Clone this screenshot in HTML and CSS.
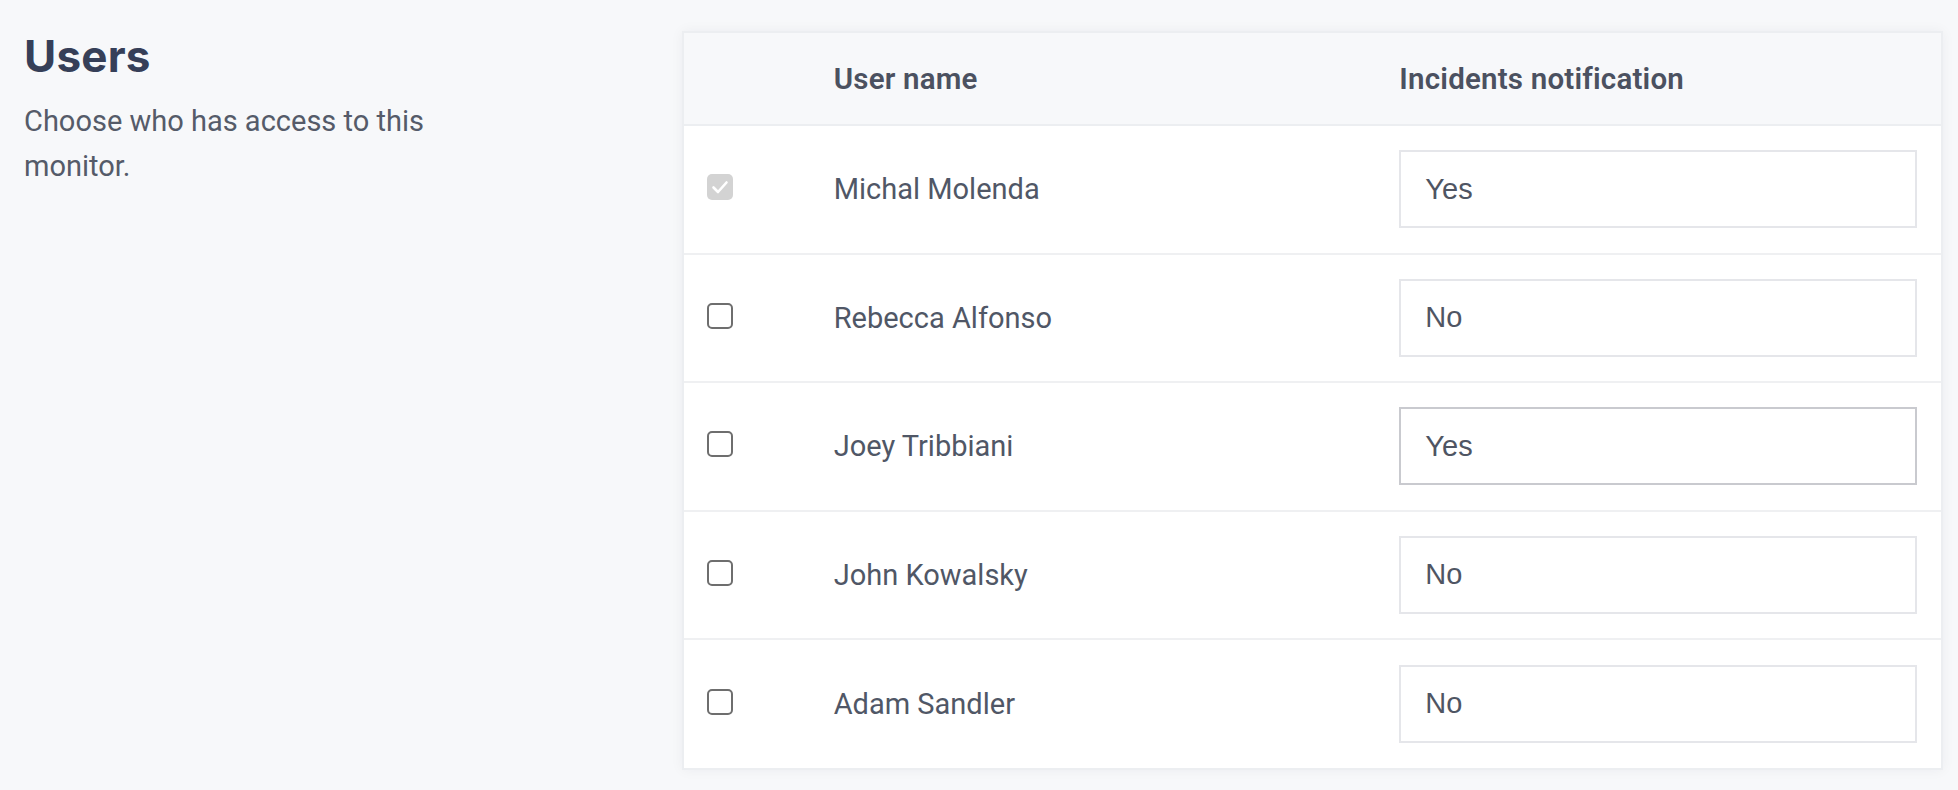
FILE: index.html
```html
<!DOCTYPE html>
<html lang="en">
<head>
<meta charset="utf-8">
<title>Users</title>
<link rel="stylesheet" href="styles.css">
</head>
<body>
<main class="page">
  <section class="intro">
    <h1 class="intro-title">Users</h1>
    <p class="intro-text">Choose who has access to this monitor.</p>
  </section>
  <section class="card">
    <table class="users">
      <colgroup>
        <col class="col-check">
        <col class="col-name">
        <col class="col-notify">
      </colgroup>
      <thead>
        <tr>
          <th></th>
          <th>User name</th>
          <th>Incidents notification</th>
        </tr>
      </thead>
      <tbody>
        <tr>
          <td><span class="check check-on"><svg viewBox="0 0 26 26"><path d="M6.5 13.5l4.5 4.5 8.5-9.5" fill="none" stroke="#fff" stroke-width="2.6" stroke-linecap="round" stroke-linejoin="round"/></svg></span></td>
          <td class="name">Michal Molenda</td>
          <td><div class="select">Yes</div></td>
        </tr>
        <tr>
          <td><span class="check"></span></td>
          <td class="name">Rebecca Alfonso</td>
          <td><div class="select">No</div></td>
        </tr>
        <tr>
          <td><span class="check"></span></td>
          <td class="name">Joey Tribbiani</td>
          <td><div class="select select-hover">Yes</div></td>
        </tr>
        <tr>
          <td><span class="check"></span></td>
          <td class="name">John Kowalsky</td>
          <td><div class="select">No</div></td>
        </tr>
        <tr>
          <td><span class="check"></span></td>
          <td class="name">Adam Sandler</td>
          <td><div class="select">No</div></td>
        </tr>
      </tbody>
    </table>
  </section>
</main>
</body>
</html>
```

FILE: styles.css
```css
* { box-sizing: border-box; }

html, body {
  margin: 0;
  padding: 0;
  background: #f7f8fa;
}

body {
  font-family: Roboto, "Noto Sans", sans-serif;
  color: #505766;
}

.page {
  display: grid;
  grid-template-columns: 658px 1fr;
  padding: 31px 15px 23px 24px;
}

.intro-title {
  margin: 2px 0 0;
  font-family: Inter, "Liberation Sans", sans-serif;
  font-weight: 700;
  font-size: 44px;
  line-height: 46px;
  color: #363f58;
  letter-spacing: 0.2px;
}

.intro-text {
  margin: 20px 0 0;
  max-width: 450px;
  font-size: 29px;
  line-height: 45px;
  color: #555b69;
}

.card {
  background: #fff;
  border: 2px solid #eceef1;
  box-shadow: 0 0 12px rgba(30, 40, 60, 0.05);
}

.users {
  width: 100%;
  border-collapse: collapse;
  table-layout: fixed;
}

.col-check { width: 10%; }
.col-name { width: 45%; }
.col-notify { width: 45%; }

.users th {
  height: 92px;
  padding: 0 24px;
  text-align: left;
  font-size: 29.5px;
  font-weight: 600;
  letter-spacing: 0.2px;
  color: #4b5160;
  background: #f7f8fa;
  border-bottom: 2px solid #eceef1;
}

.users td {
  height: 128.5px;
  padding: 0 24px;
  border-bottom: 2px solid #eff0f2;
  vertical-align: middle;
}

.users tbody tr:last-child td { border-bottom: 0; }

.name {
  font-size: 29px;
  color: #505766;
}

.check {
  display: block;
  width: 26px;
  height: 26px;
  margin: -4px 0 0 -1px;
  border: 2px solid #6e6e6e;
  border-radius: 5px;
  background: #fff;
}

.check-on {
  border: 0;
  background: #d3d3d3;
}

.check svg {
  display: block;
  width: 26px;
  height: 26px;
}

.select {
  height: 78px;
  padding: 0 24px;
  display: flex;
  align-items: center;
  border: 2px solid #e5e6ea;
  background: #fff;
  font-family: "Liberation Sans", Arial, sans-serif;
  font-size: 29px;
  color: #4f5563;
}

.select-hover { border-color: #c9cacf; }
```
